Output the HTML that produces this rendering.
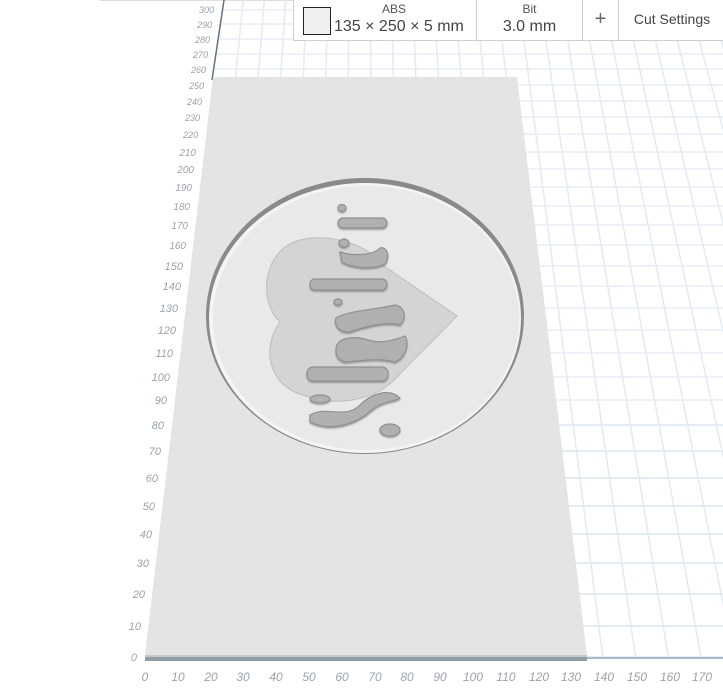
<!DOCTYPE html>
<html><head><meta charset="utf-8">
<style>
html,body{margin:0;padding:0;background:#fff;width:723px;height:694px;overflow:hidden;font-family:"Liberation Sans",sans-serif}
#tb{position:absolute;left:293px;top:0;width:432px;height:40px;background:#fff;border:1px solid #cfcfcf;border-top:none;display:flex;color:#444}
#tb>div{border-right:1px solid #cfcfcf;position:relative;height:40px}
.lbl{position:absolute;top:2px;font-size:12px;color:#555;width:100%;text-align:center}
.val{position:absolute;top:18px;font-size:16px;width:100%;text-align:center;color:#444}
</style></head><body>
<svg id="s" width="723" height="694" style="position:absolute;left:0;top:0">
<defs><filter id="sh"><feDropShadow dx="0" dy="1.5" stdDeviation="0.8" flood-color="#777" flood-opacity="0.6"/></filter></defs>
<line x1="100" y1="0.5" x2="293" y2="0.5" stroke="#ddd"/>
<g id="grid" stroke="#e4ebf3" fill="none"></g>
<line x1="224" y1="0" x2="212" y2="80" stroke="#5f7383" stroke-width="1.5"/>
<line x1="585" y1="658" x2="723" y2="658" stroke="#a9bccb" stroke-width="2"/>
<polygon points="213,77 517,77 587,655 145,655" fill="#e4e4e4"/>
<rect x="145" y="655" width="442" height="2" fill="#c8c8c8"/>
<rect x="145" y="657" width="442" height="4" fill="#909ca6"/>
<ellipse cx="365" cy="316" rx="159" ry="138" fill="#8a8a8a"/>
<ellipse cx="365" cy="318" rx="156" ry="135" fill="#f4f4f4"/>
<ellipse cx="366" cy="318" rx="153" ry="132" fill="#e9e9e9"/>
<path d="M300,240 C335,232 372,248 384,266 L457,316 L392,382 C370,402 332,406 306,396 C266,386 262,346 280,322 C258,302 262,250 300,240 Z" fill="#d4d4d4" stroke="#bdbdbd"/>
<g fill="#b0b0b0" stroke="#909090" stroke-width="1.2" filter="url(#sh)">
<ellipse cx="342" cy="208" rx="4" ry="3.5"/>
<rect x="338" y="218" width="49" height="10" rx="5"/>
<ellipse cx="344" cy="243" rx="5" ry="4"/>
<path d="M340,252 C352,256 372,256 380,248 C388,246 390,258 385,264 C372,270 352,268 342,262 Z"/>
<rect x="310" y="279" width="77" height="11" rx="5"/>
<ellipse cx="338" cy="302" rx="4" ry="3"/>
<path d="M336,318 C350,310 375,310 395,305 C405,307 407,318 400,325 C390,322 372,324 350,332 C338,333 334,324 336,318 Z"/>
<path d="M336,350 C336,338 352,335 368,340 C380,344 395,340 405,336 C410,345 405,358 395,362 C380,358 366,360 345,362 C338,360 336,356 336,350 Z"/>
<rect x="307" y="367" width="81" height="14" rx="6"/>
<ellipse cx="320" cy="399" rx="10" ry="4"/>
<path d="M310,415 C325,405 345,420 360,405 C372,393 390,388 400,398 C395,402 385,400 372,410 C355,425 330,432 310,422 Z"/>
<ellipse cx="390" cy="430" rx="10" ry="6"/>
</g>
<g font-style="italic" fill="#9aa3aa" text-anchor="end" font-size="11">
<text x="137" y="661">0</text>
<text x="141" y="630">10</text><text x="145" y="598">20</text><text x="149" y="567">30</text>
<text x="152" y="538">40</text><text x="155" y="510">50</text><text x="158" y="482">60</text>
<text x="161" y="455">70</text><text x="164" y="429">80</text><text x="167" y="404">90</text>
<text x="170" y="381">100</text><text x="173" y="357">110</text><text x="176" y="334">120</text>
<text x="178" y="312">130</text><text x="181" y="290">140</text><text x="183" y="270">150</text>
<g font-size="10"><text x="186" y="249">160</text><text x="188" y="229">170</text><text x="190" y="210">180</text>
<text x="192" y="191">190</text><text x="194" y="173">200</text><text x="196" y="156">210</text></g>
<g font-size="9"><text x="198" y="138">220</text><text x="200" y="121">230</text><text x="202" y="105">240</text>
<text x="204" y="89">250</text><text x="206" y="73">260</text><text x="208" y="58">270</text>
<text x="210" y="43">280</text><text x="212" y="28">290</text><text x="214" y="13">300</text></g>
</g>
<g font-style="italic" fill="#9aa3aa" text-anchor="middle" font-size="12">
<text x="145" y="681">0</text><text x="178" y="681">10</text><text x="211" y="681">20</text>
<text x="243" y="681">30</text><text x="276" y="681">40</text><text x="309" y="681">50</text>
<text x="342" y="681">60</text><text x="375" y="681">70</text><text x="407" y="681">80</text>
<text x="440" y="681">90</text><text x="473" y="681">100</text><text x="506" y="681">110</text>
<text x="539" y="681">120</text><text x="571" y="681">130</text><text x="604" y="681">140</text>
<text x="637" y="681">150</text><text x="670" y="681">160</text><text x="702" y="681">170</text>
</g>
</svg>
<div id="tb">
<div style="width:182px"><div style="position:absolute;left:9px;top:7px;width:26px;height:26px;border:1px solid #222;background:#efefef"></div>
<div class="lbl" style="left:18px;width:164px">ABS</div><div class="val" style="left:40px;width:140px;text-align:left">135 × 250 × 5 mm</div></div>
<div style="width:105px"><div class="lbl">Bit</div><div class="val">3.0 mm</div></div>
<div style="width:35px"><div class="val" style="top:8px;font-size:20px;color:#666">+</div></div>
<div style="width:106px;border-right:none"><div class="val" style="top:11px;font-size:14px">Cut Settings</div></div>
</div>
<script>
var g=document.getElementById('grid'),ns='http://www.w3.org/2000/svg';
var rows=[657,626,594,563,534,506,478,451,425,400,377,353,330,308,286,266,245,225,206,187,169,152,134,117,101,85,69,54,39,24,10];
function ax(y){return 145+(657-y)*0.1172;}
rows.forEach(function(y,i){var l=document.createElementNS(ns,'line');l.setAttribute('x1',ax(y));l.setAttribute('x2',723);l.setAttribute('y1',y);l.setAttribute('y2',y);l.setAttribute('stroke-width',y>400?2:1.3);g.appendChild(l);});
for(var u=10;u<=240;u+=10){var l=document.createElementNS(ns,'path');l.setAttribute('d','M'+(145+3.27*u)+',657 L'+(222+2.12*u)+',0');l.setAttribute('stroke-width',1.6);g.appendChild(l);}
</script>
</body></html>
